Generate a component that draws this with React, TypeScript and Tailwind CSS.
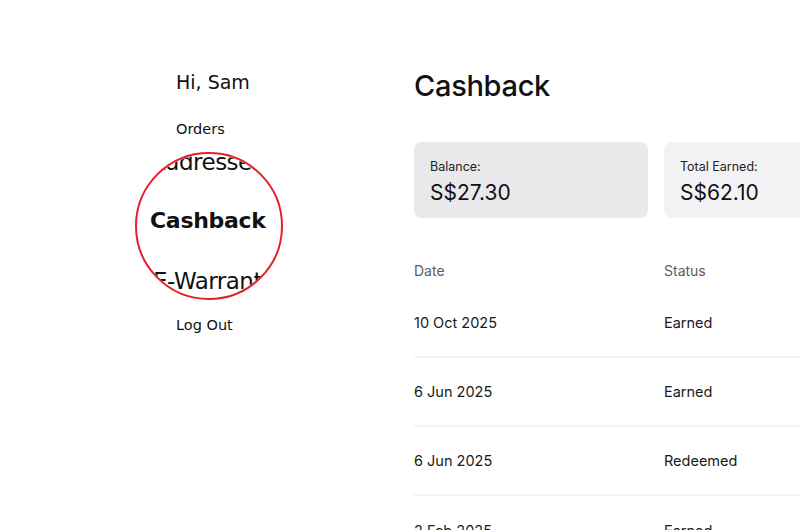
const rows = [
  { date: "10 Oct 2025", status: "Earned" },
  { date: "6 Jun 2025", status: "Earned" },
  { date: "6 Jun 2025", status: "Redeemed" },
  { date: "2 Feb 2025", status: "Earned" },
];

const sideFont = { fontFamily: '"DejaVu Sans", "Noto Sans", sans-serif' };

function Magnifier() {
  return (
    <div
      className="absolute left-[135px] top-[152px] w-[148px] h-[148px] rounded-full border-2 border-[#e5202a] bg-white overflow-hidden"
      style={sideFont}
    >
      <div className="absolute left-[13px] top-[-3px] text-[23px] leading-none text-[#111] whitespace-nowrap tracking-[-0.5px]">
        Addresses
      </div>
      <div className="absolute left-[13px] top-[56px] text-[22px] font-bold leading-none text-[#111] whitespace-nowrap tracking-[-0.3px]">
        Cashback
      </div>
      <div className="absolute left-[16px] top-[116px] text-[23px] leading-none text-[#111] whitespace-nowrap tracking-[-0.5px]">
        E-Warranty
      </div>
    </div>
  );
}

function Sidebar() {
  return (
    <aside className="w-[414px] shrink-0 pl-[176px] pt-[70px]" style={sideFont}>
      <div className="text-[19px] leading-[24px] text-[#111] whitespace-nowrap">Hi, Sam</div>
      <nav className="mt-[26px] flex flex-col gap-[30px] text-[14.5px] leading-[19px] text-[#111] whitespace-nowrap">
        <span>Orders</span>
        <span>Addresses</span>
        <span>Cashback</span>
        <span>E-Warranty</span>
        <span>Log Out</span>
      </nav>
    </aside>
  );
}

export default function App() {
  return (
    <div
      className="relative w-[800px] h-[530px] overflow-hidden bg-white flex"
      style={{ fontFamily: 'Inter, "Noto Sans", sans-serif' }}
    >
      <Sidebar />
      <Magnifier />
      <main className="pt-[68px] w-[734px] shrink-0">
        <h1 className="text-[29px] leading-[36px] font-medium text-[#111] tracking-[-0.3px]">Cashback</h1>
        <div className="mt-[38px] grid grid-cols-3 gap-4">
          <div className="h-[76px] rounded-lg bg-[#e9e9ec] pl-4 pt-[17px]">
            <div className="text-[12.5px] leading-4 text-[#222]">Balance:</div>
            <div className="mt-[5px] text-[21px] leading-[26px] text-[#111]">S$27.30</div>
          </div>
          <div className="h-[76px] rounded-lg bg-[#f3f3f5] pl-4 pt-[17px]">
            <div className="text-[12.5px] leading-4 text-[#222]">Total Earned:</div>
            <div className="mt-[5px] text-[21px] leading-[26px] text-[#111]">S$62.10</div>
          </div>
          <div />
        </div>
        <div className="mt-[42px] grid grid-cols-3 gap-x-4 text-[14px] text-[#5c5c5c] h-[20px] items-center">
          <span>Date</span>
          <span>Status</span>
        </div>
        <div className="mt-[9px]">
          {rows.map((r, i) => (
            <div
              key={i}
              className={`grid grid-cols-3 gap-x-4 h-[69px] items-center text-[14.5px] text-[#1a1a1a] ${
                i < rows.length - 1 ? "border-b-2 border-[#f2f2f3]" : ""
              }`}
            >
              <span>{r.date}</span>
              <span>{r.status}</span>
            </div>
          ))}
        </div>
      </main>
    </div>
  );
}
